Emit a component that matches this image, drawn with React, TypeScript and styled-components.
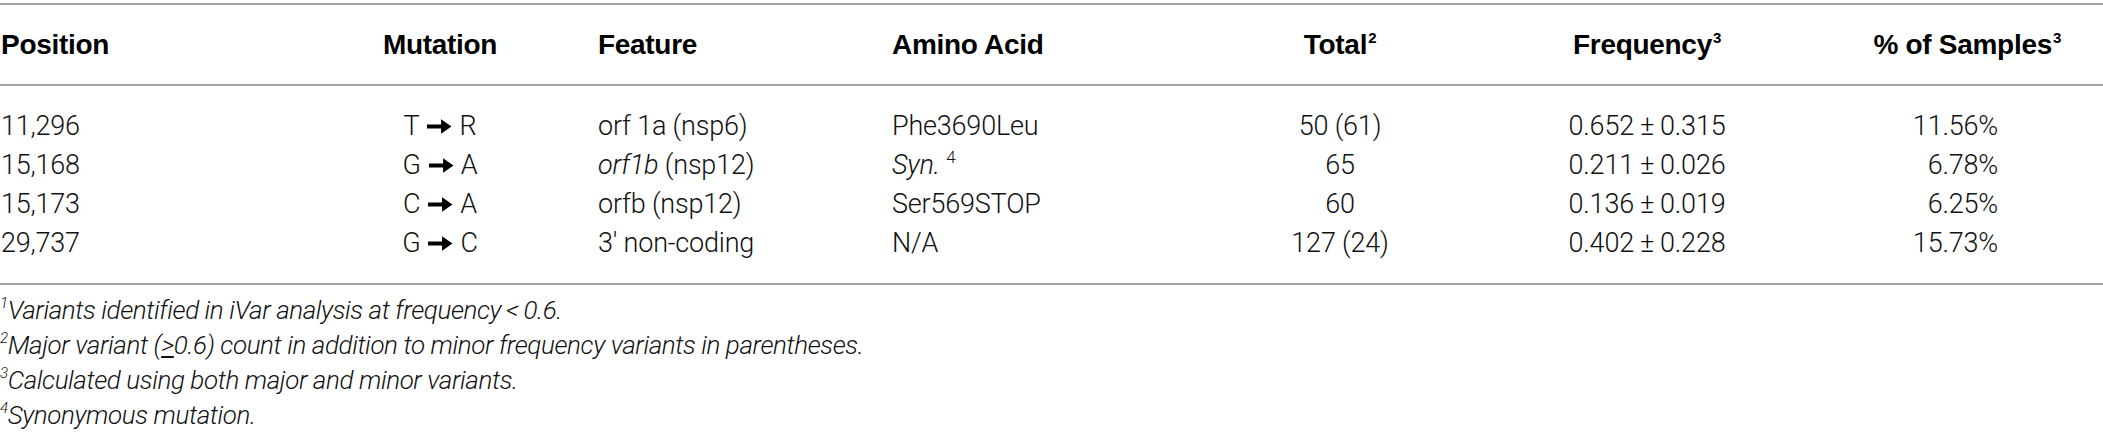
import React from "react";
import styled, { createGlobalStyle } from "styled-components";

const Global = createGlobalStyle`
  html, body { margin: 0; padding: 0; background: #fff; overflow: hidden; }
  body { font-family: Roboto, "Liberation Sans", Arial, sans-serif; color: #111; }
`;

const TRACKS = "360px 160px 372px 294px 308px 306px 303px";

const Wrap = styled.div`
  width: 2103px;
  padding-top: 3px;
`;

const Table = styled.div`
  border-top: 2px solid #a3a3a3;
  border-bottom: 2px solid #a3a3a3;
`;

const HeadRow = styled.div`
  display: grid;
  grid-template-columns: ${TRACKS};
  height: 79px;
  align-items: center;
  border-bottom: 2px solid #a3a3a3;
`;

const Body = styled.div`
  padding: 21px 0 20px;
`;

const Row = styled.div`
  display: grid;
  grid-template-columns: ${TRACKS};
  height: 39px;
  align-items: center;
`;

const HeadCell = styled.div<{ $align: string; $pl?: number; $pr?: number }>`
  font-family: "Liberation Sans", Arial, sans-serif;
  font-weight: 700;
  font-size: 28px;
  letter-spacing: -0.3px;
  color: #000;
  text-align: ${(p) => p.$align};
  padding-left: ${(p) => p.$pl ?? 0}px;
  padding-right: ${(p) => p.$pr ?? 0}px;
  white-space: nowrap;
  line-height: 32px;
`;

const Cell = styled.div<{ $align: string; $pl?: number; $pr?: number }>`
  font-family: Roboto, "Liberation Sans", Arial, sans-serif;
  font-weight: 300;
  font-size: 27px;
  letter-spacing: -0.2px;
  line-height: 39px;
  color: #111;
  text-align: ${(p) => p.$align};
  padding-left: ${(p) => p.$pl ?? 0}px;
  padding-right: ${(p) => p.$pr ?? 0}px;
  white-space: nowrap;
`;

const HeadSup = styled.sup`
  font-size: 15px;
  font-weight: 700;
  vertical-align: 11px;
  line-height: 0;
  margin-left: 1px;
`;

const Sup = styled.sup`
  font-size: 17px;
  vertical-align: 11px;
  line-height: 0;
  font-style: normal;
`;

const PlusMinus = styled.span`
  margin: 0 6px;
`;

const ArrowIcon = styled.svg`
  width: 25px;
  height: 19px;
  margin: 0 7px 0 8px;
  vertical-align: -1px;
`;

const Arrow = () => (
  <ArrowIcon viewBox="0 0 24 18" aria-hidden="true">
    <path d="M0 7.1 H13.5 V2 L23.5 9 L13.5 16 V10.9 H0 Z" fill="#000" />
  </ArrowIcon>
);

const Ital = styled.i`
  font-style: italic;
`;

const Notes = styled.div`
  padding-top: 8px;
`;

const Note = styled.div`
  font-family: Roboto, "Liberation Sans", Arial, sans-serif;
  font-weight: 300;
  font-style: italic;
  font-size: 26px;
  letter-spacing: -0.4px;
  line-height: 35px;
  color: #111;
  white-space: nowrap;
`;

const NoteSup = styled.sup`
  font-size: 15px;
  vertical-align: 11px;
  line-height: 0;
`;

type Col = { align: string; pl?: number; pr?: number; hpr?: number };
const cols: Col[] = [
  { align: "left", pl: 1 },
  { align: "center" },
  { align: "left", pl: 78 },
  { align: "left" },
  { align: "center" },
  { align: "center" },
  { align: "right", pr: 105, hpr: 42 },
];

const headers: React.ReactNode[] = [
  "Position",
  "Mutation",
  "Feature",
  "Amino Acid",
  <>Total<HeadSup>2</HeadSup></>,
  <>Frequency<HeadSup>3</HeadSup></>,
  <>% of Samples<HeadSup>3</HeadSup></>,
];

const Mut = ({ a, b }: { a: string; b: string }) => (
  <>
    {a}
    <Arrow />
    {b}
  </>
);

const Pm = ({ a, b }: { a: string; b: string }) => (
  <>
    {a}
    <PlusMinus>±</PlusMinus>
    {b}
  </>
);

const rows: React.ReactNode[][] = [
  ["11,296", <Mut a="T" b="R" />, "orf 1a (nsp6)", "Phe3690Leu", "50 (61)", <Pm a="0.652" b="0.315" />, "11.56%"],
  [
    "15,168",
    <Mut a="G" b="A" />,
    <><Ital>orf1b</Ital> (nsp12)</>,
    <><Ital>Syn.</Ital> <Sup>4</Sup></>,
    "65",
    <Pm a="0.211" b="0.026" />,
    "6.78%",
  ],
  ["15,173", <Mut a="C" b="A" />, "orfb (nsp12)", "Ser569STOP", "60", <Pm a="0.136" b="0.019" />, "6.25%"],
  ["29,737", <Mut a="G" b="C" />, "3\u2032 non-coding", "N/A", "127 (24)", <Pm a="0.402" b="0.228" />, "15.73%"],
];

export default function App() {
  return (
    <>
      <Global />
      <Wrap>
        <Table>
          <HeadRow>
            {headers.map((h, i) => (
              <HeadCell key={i} $align={cols[i].align} $pl={cols[i].pl} $pr={cols[i].hpr ?? cols[i].pr}>
                {h}
              </HeadCell>
            ))}
          </HeadRow>
          <Body>
            {rows.map((r, ri) => (
              <Row key={ri}>
                {r.map((c, i) => (
                  <Cell key={i} $align={cols[i].align} $pl={cols[i].pl} $pr={cols[i].pr}>
                    {c}
                  </Cell>
                ))}
              </Row>
            ))}
          </Body>
        </Table>
        <Notes>
          <Note><NoteSup>1</NoteSup>Variants identified in iVar analysis at frequency{"\u2009<\u2009"}0.6.</Note>
          <Note><NoteSup>2</NoteSup>Major variant (<u>&gt;</u>0.6) count in addition to minor frequency variants in parentheses.</Note>
          <Note><NoteSup>3</NoteSup>Calculated using both major and minor variants.</Note>
          <Note><NoteSup>4</NoteSup>Synonymous mutation.</Note>
        </Notes>
      </Wrap>
    </>
  );
}
